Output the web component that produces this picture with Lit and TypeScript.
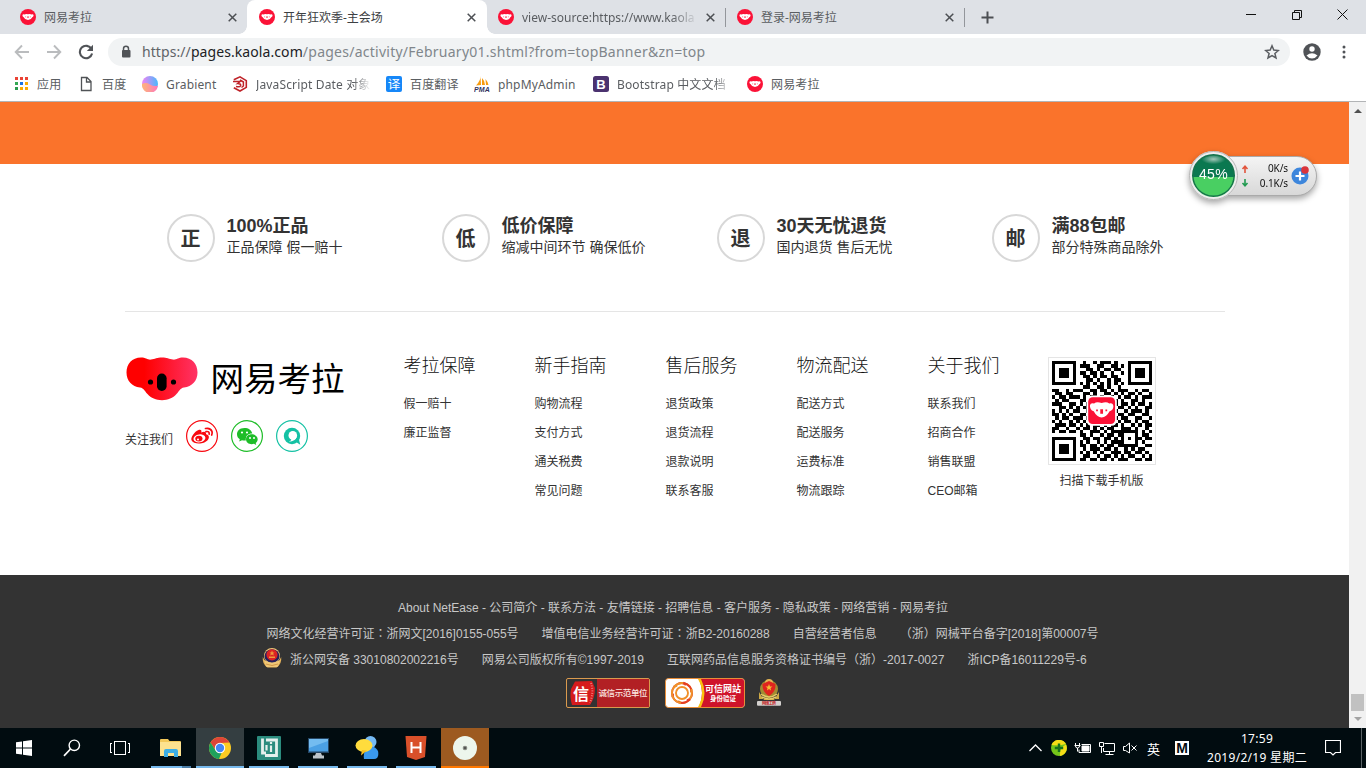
import { LitElement, html, svg, css } from "lit";
import { customElement } from "lit/decorators.js";

const koala = (size: number) => svg`<svg width=${size} height=${size} viewBox="0 0 16 16">
  <circle cx="8" cy="8" r="8" fill="#fb1237"/>
  <path d="M2.400 6.200Q2.600 5 4.400 5.400Q6 4.700 8 5.300Q10 4.700 11.600 5.400Q13.400 5 13.600 6.300Q13.500 7.800 12.300 8.200Q11 11 8 11.100Q5 11 3.700 8.200Q2.500 7.800 2.400 6.200Z" fill="#fff"/>
  <path d="M7.400 7.200h1.200v1.700h-1.200zM5.300 7.500h.8v.8h-.8zM9.900 7.500h.8v.8H9.900z" fill="#fb3350"/></svg>`;

const cross = svg`<svg width="9" height="9" viewBox="0 0 9 9"><path d="M.7.7l7.6 7.6M8.3.7L.7 8.3" stroke="#4c4f53" stroke-width="1.5"/></svg>`;

const tabs = [
  { title: "网易考拉", cls: "" },
  { title: "开年狂欢季-主会场", cls: "active" },
  { title: "view-source:https://www.kaola", cls: "sep" },
  { title: "登录-网易考拉", cls: "sep" },
];

const page = svg`<svg width="16" height="16" viewBox="0 0 16 16"><path d="M3.500 1.500h5.500l4 4v9h-9.500zM8.500 1.500v4.500h4.500" fill="none" stroke="#505356" stroke-width="1.300"/></svg>`;
const appsIcon = svg`<svg width="16" height="16" viewBox="0 0 16 16" shape-rendering="crispEdges">${[0, 1, 2].map(r => [0, 1, 2].map(c => svg`<rect x=${2 + c * 5} y=${1 + r * 5} width="3" height="3" fill=${[["#ea4335", "#ea4335", "#ea4335"], ["#34a853", "#1a73e8", "#fbab04"], ["#2b9a4d", "#fbab04", "#fbab04"]][r][c]}/>`))}</svg>`;
const grabient = svg`<svg width="16" height="16" viewBox="0 0 16 16"><defs><linearGradient id="ga"><stop stop-color="#f183f4"/><stop offset="1" stop-color="#48b8fb"/></linearGradient><linearGradient id="gb"><stop stop-color="#fdb678"/><stop offset="1" stop-color="#fd78bd"/></linearGradient></defs><circle cx="8" cy="8" r="8" fill="url(#ga)"/><path d="M0 8Q4 6 8 8.500T16 9.500A8 8 0 0 1 0 8Z" fill="url(#gb)"/></svg>`;
const jsIcon = svg`<svg width="16" height="16" viewBox="0 0 16 16"><path d="M1.800 3.800L8 .9L14.300 4.600V11.400L8 15L1.800 11.800" fill="none" stroke="#bf2228" stroke-width="1.600"/><path d="M1 5.500H8L5.500 7.600Q8.800 7.500 8.700 9.400Q8 11.600 4 10.500M8 4L11.400 6V10L9.500 11.500" fill="none" stroke="#bf2228" stroke-width="1.500"/></svg>`;
const fanyi = svg`<svg width="16" height="16" viewBox="0 0 16 16"><rect width="16" height="16" rx="2" fill="#1687f8"/><text x="8" y="12.600" text-anchor="middle" font-size="12.500" fill="#fff" font-family="Noto Sans CJK SC">译</text></svg>`;
const pma = svg`<svg width="16" height="16" viewBox="0 0 16 16"><path d="M6.500 0Q7 4 2 9.500L7 9ZM8 2Q11 5 11 9H8ZM11.500 3Q14 6 14.500 9H12Z" fill="#f89c0e"/><text x="0" y="15.500" font-size="7" textLength="16" font-weight="bold" font-style="italic" fill="#34345e" font-family="Liberation Sans">PMA</text></svg>`;
const boot = svg`<svg width="16" height="16" viewBox="0 0 16 16"><rect width="16" height="16" rx="2.500" fill="#4b326f"/><text x="8" y="12.700" text-anchor="middle" font-size="13" font-weight="bold" fill="#fff" font-family="Liberation Sans">B</text></svg>`;

const bookmarks = [
  { icon: appsIcon, label: "应用", w: 65 },
  { icon: page, label: "百度", w: 64 },
  { icon: grabient, label: "Grabient", w: 90 },
  { icon: jsIcon, label: "JavaScript Date 对象", w: 154, cut: true },
  { icon: fanyi, label: "百度翻译", w: 88 },
  { icon: pma, label: "phpMyAdmin", w: 119 },
  { icon: boot, label: "Bootstrap 中文文档", w: 154, cut: true },
  { icon: koala(16), label: "网易考拉", w: 90 },
];

const promises = [
  ["正", "100%正品", "正品保障 假一赔十"],
  ["低", "低价保障", "缩减中间环节 确保低价"],
  ["退", "30天无忧退货", "国内退货 售后无忧"],
  ["邮", "满88包邮", "部分特殊商品除外"],
];

const linkCols = [
  ["考拉保障", "假一赔十", "廉正监督"],
  ["新手指南", "购物流程", "支付方式", "通关税费", "常见问题"],
  ["售后服务", "退货政策", "退货流程", "退款说明", "联系客服"],
  ["物流配送", "配送方式", "配送服务", "运费标准", "物流跟踪"],
  ["关于我们", "联系我们", "招商合作", "销售联盟", "CEO邮箱"],
];

const qrRows = [
  "11111110010010111010001111111",
  "10000010111001100110101000001",
  "10111010001101011011001011101",
  "10111010110110100100101011101",
  "10111010011010110110001011101",
  "10000010001101001011001000001",
  "11111110101010101010101111111",
  "00000000011001101001000000000",
  "11001011100110110101110010110",
  "01101100011010011010101101001",
  "10110111010110100101011010111",
  "01011000110011000110100110100",
  "11100110101000000010110101101",
  "00110101011000000001101010011",
  "10101011001000000010010111010",
  "11010100110000000001101100110",
  "01011011101000000010110011001",
  "10100101010110011001011010110",
  "01110110101011010110100101011",
  "11001001011010101100111010010",
  "10110110100111010111111110101",
  "00000000110100101101100010110",
  "11111110011011011010101011011",
  "10000010101001010111100010100",
  "10111010110110101101111110011",
  "10111010010111011010010101100",
  "10111010101010100111011011010",
  "10000010011001011010101100101",
  "11111110110110110101110011011",
];

const qr = svg`<svg width="100" height="100" viewBox="0 0 29 29" shape-rendering="crispEdges">
  ${qrRows.map((r, y) => [...r].map((v, x) => v === "1" ? svg`<rect x=${x} y=${y} width="1" height="1"/>` : null))}
  <g shape-rendering="auto"><rect x="10" y="10" width="8.800" height="8.800" rx="1.500" fill="#fff"/><rect x="10.500" y="10.500" width="7.800" height="7.800" rx="1.300" fill="#fb1237"/>
  <path d="M11 12.800Q11.200 12 12.200 12.300Q13 11.700 14.400 12.200Q15.800 11.700 16.600 12.300Q17.700 12 17.800 13.100Q17.800 14.200 16.700 14.600Q15.800 16.300 14.400 16.400Q13 16.300 12.100 14.600Q10.900 14.100 11 12.800Z" fill="#fff"/><path d="M14 14h.8v1.300H14zM12.800 14.100h.5v.5h-.5zM15.500 14.100h.5v.5h-.5z" fill="#fb1237"/></g></svg>`;

const logo = svg`<svg width="72" height="44" viewBox="0 0 72 44"><defs><linearGradient id="kl"><stop offset=".25" stop-color="#fe0000"/><stop offset="1" stop-color="#ff3366"/></linearGradient></defs>
  <path d="M15 .5C20 .5 21.500 3 25 2.600C29 2 31 .5 36 .5S43 2 47 2.600C50.500 3 52 .5 57 .5C66 .5 71.500 7 71.500 15.500C71.500 24 66 29.500 58 30.500C54 31.200 53.500 34 50.500 37C47 41 42 43.200 36 43.200S25 41 21.500 37C18.500 34 18 31.200 14 30.500C6 29.500.5 24 .5 15.500C.5 7 6 .5 15 .5Z" fill="url(#kl)"/>
  <rect x="31" y="16.500" width="9.600" height="17.500" rx="4.800"/><circle cx="24.500" cy="25" r="2.600"/><circle cx="47.500" cy="25" r="2.600"/></svg>`;

const weibo = svg`<svg width="32" height="32" viewBox="0 0 32 32"><circle cx="16" cy="16" r="15.400" fill="none" stroke="#f8080f" stroke-width="1.200"/>
  <path d="M12.500 10C15 9 16 10.500 15.200 12.500C18 11.300 20.500 11.500 20 14.200C23 15 23.500 17 22.300 19.200C19.500 24.300 8 25.300 5.500 20.300C4.300 17.500 8.500 11.500 12.500 10Z" fill="#f8080f"/><ellipse cx="13.400" cy="18.400" rx="6" ry="4" fill="#fff" transform="rotate(-8 13 18)"/><ellipse cx="12.900" cy="18.600" rx="3.600" ry="2.900" fill="#f8080f"/><circle cx="12" cy="19.400" r="1" fill="#fff"/>
  <path d="M19.500 8.500Q24.500 7.500 26 11.500Q26.500 13.500 25.700 15M20 11.600Q23.500 11 23.200 14.200" fill="none" stroke="#f8080f" stroke-width="1.700" stroke-linecap="round"/></svg>`;
const wechat = svg`<svg width="32" height="32" viewBox="0 0 32 32"><circle cx="16" cy="16" r="15.400" fill="none" stroke="#1ebd28" stroke-width="1.200"/>
  <path d="M13.500 8C8.500 8 6 11 6 14.200C6 16.400 7 18 8.800 19.200L8.200 21.500L11 20.200Q13 20.800 14.800 20.500C14.500 15.500 17 13.600 21.300 13.500C20.500 10 17.500 8 13.500 8Z" fill="#1ebd28"/><path d="M21 14.300C17 14.300 15 16.600 15 19.200C15 23 19 25 23 23.800L25.200 25L24.700 22.900C26 22 26.700 20.700 26.700 19.200C26.700 16.500 24 14.300 21 14.300Z" fill="#1ebd28"/><g fill="#fff"><circle cx="11" cy="12.500" r="1.100"/><circle cx="16" cy="12.500" r="1.100"/><circle cx="19" cy="18" r="1"/><circle cx="23" cy="18" r="1"/></g></svg>`;
const yixin = svg`<svg width="32" height="32" viewBox="0 0 32 32"><circle cx="16" cy="16" r="15.400" fill="none" stroke="#14c1a4" stroke-width="1.200"/>
  <circle cx="16" cy="16" r="8.200" fill="#14c1a4"/><path d="M20 22L24.300 24.800L22.800 19Z" fill="#14c1a4"/>
  <circle cx="16.800" cy="15.400" r="4.300" fill="#fff"/><path d="M20.800 16.500Q19.500 21.500 12.800 21.800Q15.500 20.800 15.500 18.700L18 17Z" fill="#fff"/></svg>`;

const police = svg`<svg width="20" height="20" viewBox="0 0 20 20"><path d="M.8 9Q0 16 5.500 19.500H14.500Q20 16 19.200 9L16 15H4Z" fill="#e8b45b"/><circle cx="10" cy="8" r="8" fill="#f0c877"/><ellipse cx="10" cy="8" rx="7.500" ry="6.800" fill="#26215c"/><circle cx="10" cy="6.800" r="5.600" fill="#dc2323"/><path d="M10 2.500L10.800 4.500H12.500L11.200 5.600L11.800 7.500L10 6.400L8.200 7.500L8.800 5.600L7.500 4.500H9.200ZM7 8.500H13V9.900H7Z" fill="#f09a3a"/><path d="M2 12Q10 17.500 18 12L15.500 19H4.500Z" fill="#f0c877"/><path d="M4 16Q10 19 16 16" fill="none" stroke="#c98b3a" stroke-width=".8"/></svg>`;

const badge1 = svg`<svg width="84" height="30" viewBox="0 0 84 30"><rect x=".5" y=".5" width="83" height="29" rx="1.500" fill="#333" stroke="#d99a4e"/><rect x="31" y="1" width="52" height="28" fill="#b22024"/><path d="M9 3.500L26 3L29 10Q29 20 24 27H6Q3.500 19 5 11Z" fill="#d61a1c"/><path d="M25 5Q28 14 24 25" stroke="#e77" fill="none" stroke-dasharray="1 1.500" stroke-width="2"/><text x="7" y="21.500" font-size="16" font-weight="bold" fill="#fff" font-family="Noto Sans CJK SC">信</text><text x="32.500" y="18" font-size="8.500" textLength="49" font-weight="500" fill="#fbe6e0" font-family="Noto Sans CJK SC">诚信示范单位</text></svg>`;
const badge2 = svg`<svg width="80" height="30" viewBox="0 0 80 30"><rect x=".5" y=".5" width="79" height="29" rx="3" fill="#fff" stroke="#e88d38"/><path d="M34 1H77Q79 1 79 3V27Q79 29 77 29H34Q40 15 34 1Z" fill="#cf132a"/><path d="M33 1Q41 15 33 29H36Q43 15 36 1Z" fill="#fbc20e"/><g fill="none" stroke-width="1.900">${[0, 60, 120, 180, 240, 300].map((a, i) => svg`<path d="M7.500 19Q5.500 10 12.500 6Q17 3.500 21 7" stroke=${i % 2 ? "#f0912a" : "#e43c24"} transform="rotate(${a} 17 15)"/>`)}</g><circle cx="17" cy="15" r="6" fill="none" stroke="#f08f29" stroke-width="1.900"/><g fill="#fff" font-weight="bold" font-family="Noto Sans CJK SC"><text x="40" y="13.500" font-size="9" textLength="36">可信网站</text><text x="45" y="22.800" font-size="6.500" textLength="26">身份验证</text></g></svg>`;
const badge3 = svg`<svg width="24" height="30" viewBox="0 0 24 30"><circle cx="12" cy="11" r="9" fill="#a28b32"/><path d="M2 14L7 22H17L22 14V21H2Z" fill="#cda945"/><circle cx="12" cy="5" r="4" fill="#e4b454"/><path d="M5.500 6L12 3L18.500 6Q19 14 12 18Q5 14 5.500 6Z" fill="#df241e"/><path d="M12 6L13 8.500H15.500L13.500 10L14 12.500L12 11L10 12.500L10.500 10L8.500 8.500H11Z" fill="#f4bd32"/><path d="M4 16Q12 22 20 16M5 19Q12 23 19 19" stroke="#e6cb68" stroke-width="1.500" fill="none"/><rect x="0" y="23" width="24" height="4.800" rx="1" fill="#d3d0ce"/><text x="5" y="27" font-size="4" font-weight="bold" textLength="14" fill="#c32828" font-family="Noto Sans CJK SC">网络工商</text></svg>`;

const taskIcons = [
  svg`<svg width="24" height="24" viewBox="0 0 24 24"><path d="M4 6.300L10 5.400V11.500H4ZM11 5.200L20 4V11.500H11ZM4 12.500H10V18.600L4 17.700ZM11 12.500H20V20L11 18.800Z" fill="#fff"/></svg>`,
  svg`<svg width="24" height="24" viewBox="0 0 24 24"><circle cx="14.300" cy="9.300" r="5.200" fill="none" stroke="#fff" stroke-width="1.400"/><path d="M10.500 13L4 19.800" stroke="#fff" stroke-width="1.700"/></svg>`,
  svg`<svg width="24" height="24" viewBox="0 0 24 24" shape-rendering="crispEdges"><path d="M6.500 5.500H17.500V18.500H6.500ZM4 7.500H2.500V16.500H4M20 7.500H21.500V16.500H20" fill="none" stroke="#fff"/></svg>`,
  svg`<svg width="24" height="24" viewBox="0 0 24 24"><path d="M1 4Q1 3 2 3H9L10.500 5H21Q22 5 22 6V19H1Z" fill="#f3c95a"/><path d="M1 6H22V20H1Z" fill="#fde28f"/><path d="M5 21V15Q5 13 7 13H17Q19 13 19 15V21H15V17H9V21Z" fill="#3daee5"/></svg>`,
  svg`<svg width="24" height="24" viewBox="0 0 24 24"><circle cx="12" cy="12" r="11" fill="#fbcb23"/><path d="M2.500 6.500A11 11 0 0 1 21.500 6.500L12 7Q8 8 7.500 14Z" fill="#dd4538"/><path d="M2.500 6.500L7.700 14.500Q9.500 17 13.500 17L11 23A11 11 0 0 1 2.500 6.500Z" fill="#1fa15c"/><circle cx="12" cy="12" r="5.200" fill="#fff"/><circle cx="12" cy="12" r="4.200" fill="#4486f4"/></svg>`,
  svg`<svg width="24" height="24" viewBox="0 0 24 24"><rect width="24" height="24" rx="1" fill="#2b8c7e"/><path d="M5.500 2.500V17H9M9 4H19.500V19.500H8" fill="none" stroke="#e5f0ed" stroke-width="2.800"/><path d="M9.500 9V14.500M14 9.500V16M14 6V8" fill="none" stroke="#e5f0ed" stroke-width="2.200"/></svg>`,
  svg`<svg width="24" height="24" viewBox="0 0 24 24"><path d="M2 2H23V17H2Z" fill="#244563"/><path d="M3 3H22V15.500H3Z" fill="#4ba0e4"/><path d="M3 12L22 5V3H3Z" fill="#74bcf0"/><path d="M10 17H15L16 19.500H18V22.500H7V19.500H9Z" fill="#bcc4ca"/></svg>`,
  svg`<svg width="24" height="24" viewBox="0 0 24 24"><circle cx="15.500" cy="6" r="6" fill="#75baf4"/><path d="M9 23Q8 16 12 12.500Q19 8 23 15Q24.500 23 19 23Z" fill="#3a99ee"/><ellipse cx="9" cy="9.500" rx="8.500" ry="6.500" fill="#ffdc3d"/><path d="M7 14L6 19.500L12 14.500Z" fill="#f5bd22"/></svg>`,
  svg`<svg width="24" height="24" viewBox="0 0 24 24"><path d="M1.500 0H22.500L21 21L12 24L3 21Z" fill="#d9502a"/><path d="M7.500 6V17M16.500 6V17M7.500 11.500H16.500" stroke="#fff" stroke-width="2"/></svg>`,
  svg`<svg width="24" height="24" viewBox="0 0 24 24"><circle cx="12" cy="12" r="12" fill="#edf6ec"/><circle cx="12" cy="12" r="2.300" fill="#868b83"/><circle cx="12" cy="12" r="1" fill="#444"/></svg>`,
];
const taskCls = ["", "", "", "run first", "run cur", "run", "run", "run", "run", "run hot"];

// Full-width punctuation is set in the face that centres it in the em box.
const centred = (s: string) => s.split(/([：（）])/).map(p => (/^[：（）]$/.test(p) ? html`<span class="punct">${p}</span>` : p));

const licences = [
  "网络文化经营许可证：浙网文[2016]0155-055号",
  "增值电信业务经营许可证：浙B2-20160288",
  "自营经营者信息",
  "（浙）网械平台备字[2018]第00007号",
];

@customElement("app-root")
export class AppRoot extends LitElement {
  static styles = css`
    :host { display: block; width: 1366px; height: 768px; overflow: hidden; font: 12px "Liberation Sans", "Noto Sans CJK SC", sans-serif; color: #333; }
    * { box-sizing: border-box; }
    svg { display: block; flex: none; }
    .screen { display: flex; flex-direction: column; height: 768px; background: #fff; position: relative; }
    .ui { font-family: "Noto Sans", "Noto Sans CJK SC", sans-serif; color: #5a5d61; }
    .tabs { height: 34px; background: #dee1e6; display: flex; padding-left: 8px; align-items: stretch; }
    .tab { width: 239px; flex: none; display: flex; align-items: center; padding: 0 11px 0 12px; gap: 8px; position: relative; }
    .tab.active { background: #fff; border-radius: 8px 8px 0 0; color: #3c4043; width: 240px; margin-right: -1px; padding-right: 12px; }
    .tab.active::before, .tab.active::after { content: ""; position: absolute; bottom: 0; width: 8px; height: 8px; }
    .tab.active::before { left: -8px; background: radial-gradient(circle at 0 0, transparent 7.500px, #fff 8px); }
    .tab.active::after { right: -8px; background: radial-gradient(circle at 100% 0, transparent 7.500px, #fff 8px); }
    .tab.sep::after { content: ""; position: absolute; right: -1px; top: 8px; height: 19px; width: 1px; background: #93969b; }
    .title { flex: none; width: 176px; white-space: nowrap; overflow: hidden; line-height: 20px; padding-top: 1px; }
    .fade { -webkit-mask-image: linear-gradient(90deg, #000 85%, transparent); mask-image: linear-gradient(90deg, #000 85%, transparent); }
    .tab .x { margin-left: auto; }
    .plus { margin: 11px 0 0 17px; }
    .winbtns { margin-left: auto; padding: 9px 17px 0 0; }
    .toolbar { height: 35px; display: flex; align-items: center; padding: 0 14px; }
    .nav { display: flex; width: 94px; gap: 16px; }
    .omni { flex: none; height: 28px; width: 1182px; border-radius: 14px; background: #f1f3f4; display: flex; align-items: center; padding: 0 10px 0 13px; }
    .url { margin-left: 11px; flex: 1; font-family: "Noto Sans", sans-serif; font-size: 14px; letter-spacing: .25px; color: #80868b; white-space: nowrap; line-height: 20px; }
    .url .scheme { color: #5f6368; letter-spacing: .08px; }
    .url .host { color: #202124; letter-spacing: .08px; }
    .tools { display: flex; gap: 20px; align-items: center; padding-left: 12px; }
    .marks { height: 33px; border-bottom: 1px solid #b2b4b6; display: flex; padding: 0 0 2px 13px; align-items: center; }
    .mark { display: flex; gap: 8px; align-items: center; white-space: nowrap; flex: none; letter-spacing: .15px; }
    .mark .lbl { line-height: 20px; padding-top: 1px; }
    .mark .cut { width: 115px; overflow: hidden; }
    .main { height: 626px; display: flex; }
    .page { width: 1349px; display: flex; flex-direction: column; }
    .orange { height: 62px; background: #fa732b; }
    .wrap { width: 1100px; margin: 0 auto 0 125px; }
    .promises { height: 148px; padding-top: 50px; display: flex; border-bottom: 1px solid #e5e5e5; }
    .promise { width: 275px; padding-left: 42px; display: flex; gap: 11.500px; }
    .ring { width: 48px; height: 48px; border: 2px solid #d8d8d8; border-radius: 50%; display: flex; align-items: center; justify-content: center; font-size: 20px; font-weight: bold; padding: 0 1px 2px 0; }
    .ptxt b { display: block; font-size: 18px; line-height: 24px; white-space: nowrap; }
    .ptxt span { display: block; font-size: 14px; line-height: 19px; white-space: nowrap; }
    .links { height: 263px; display: flex; padding-top: 45px; }
    .brand { width: 278.500px; }
    .logo { display: flex; gap: 13px; align-items: center; height: 44px; padding-left: .5px; }
    .logo span { font-size: 33.500px; font-weight: 400; color: #000; line-height: 44px; padding-top: 1px; }
    .follow { display: flex; align-items: center; margin-top: 19px; gap: 13px; }
    .follow span { padding-top: 4px; width: 48px; white-space: nowrap; }
    .col { width: 131px; }
    .col h4 { font-size: 18px; font-weight: 300; color: #111; line-height: 24px; margin: -3px 0 18px; }
    .col a { display: block; line-height: 17px; height: 17px; margin-bottom: 12px; }
    .qr { width: 108px; margin-left: -10.500px; text-align: center; }
    .qrbox { width: 108px; height: 108px; border: 1px solid #e5e5e5; display: flex; align-items: center; justify-content: center; margin-bottom: 6px; }
    .qrcap { padding-right: 1px; }
    .legal { height: 153px; background: #333; color: #c8c8c8; padding-top: 18px; display: flex; flex-direction: column; align-items: center; }
    .line { height: 26px; display: flex; align-items: center; gap: 23px; white-space: nowrap; padding-right: 3px; }
    .line.two { padding: 0 0 0 16px; }
    .line.three { padding: 0; }
    .punct { font-family: "Noto Sans CJK TC"; }
    .police { display: flex; gap: 7.500px; align-items: center; }
    .badges { display: flex; gap: 15px; padding-top: 7px; padding-right: 2px; }
    .badges svg:last-child { margin-left: -3px; }
    .scroll { width: 17px; background: #f1f1f1; display: flex; flex-direction: column; align-items: center; }
    .up { margin-top: 7px; }
    .thumb { margin-top: 581px; width: 13px; height: 17px; background: #c1c1c1; }
    .down { margin-top: 6px; }
    .taskbar { height: 40px; background: #010c10; display: flex; color: #fff; }
    .task { width: 48px; height: 40px; margin-right: 1px; display: flex; align-items: center; justify-content: center; position: relative; }
    .task:nth-child(-n+3) { margin-right: 0; }
    .task.first { margin-left: 3px; }
    .run::after { content: ""; position: absolute; bottom: 0; left: 4px; width: 40px; height: 2px; background: #76b9ed; }
    .run.first::after { background: linear-gradient(90deg, #76b9ed 31px, #4a7da6 31px); }
    .cur { background: #343e41; }
    .run.cur::after, .run.hot::after { left: 0; width: 48px; }
    .hot { background: #9d5a20; }
    .run.hot::after { background: #ff7800; }
    .tray { margin-left: auto; display: flex; align-items: center; font-family: "Noto Sans", "Noto Sans CJK SC", sans-serif; }
    .tray svg:first-child { margin-right: 1px; }
    .ime { font-size: 13px; width: 13px; margin-left: 5px; }
    .m { width: 14px; height: 14px; margin-left: 15px; background: #fff; color: #010c10; font: bold 14px/14px "Liberation Sans"; text-align: center; }
    .clock { width: 106px; margin: 0 15px 0 15px; text-align: center; line-height: 19px; white-space: nowrap; letter-spacing: .3px; }
    .show { height: 40px; width: 5px; border-left: 1px solid #5a6265; margin-left: 20px; }
    .meter { position: absolute; left: 1189px; top: 151px; width: 128px; height: 48px; display: flex; align-items: center; filter: drop-shadow(0 3px 3px rgba(0,0,0,.35)); }
    .dial { flex: none; width: 49px; height: 49px; border-radius: 50%; border: 3px solid #eee; outline: 1px solid #b5b5b5; outline-offset: -1px; background: radial-gradient(ellipse 12px 5px at 50% 12%, #a3c8ba, transparent), linear-gradient(#0a7850 0 53%, #49cf62 53%); box-shadow: inset 0 0 0 1.500px #17734c; color: #fff; font-size: 14px; letter-spacing: .3px; display: flex; align-items: center; justify-content: center; padding-bottom: 2px; z-index: 1; }
    .pill { flex: none; width: 103px; height: 40px; margin-left: -24px; border-radius: 4px 20px 20px 4px; border: 1px solid #aaa; background: linear-gradient(#f4f4f4, #d8d8d8); display: flex; align-items: center; padding-left: 26px; margin-top: 1px; }
    .rates { width: 39px; text-align: right; color: #111; font: 10px/15px "Noto Sans", sans-serif; letter-spacing: -.1px; white-space: nowrap; }
    .boost { margin-left: -1px; }
  `;

  render() {
    return html`<div class="screen">
      <div class="tabs ui">
        ${tabs.map(t => html`<div class="tab ${t.cls}">${koala(16)}<span class="title ${t.title.length > 20 ? "fade" : ""}">${t.title}</span><span class="x">${cross}</span></div>`)}
        <svg class="plus" width="13" height="13" viewBox="0 0 13 13"><path d="M6.500 .5V12.500M.5 6.500H12.500" stroke="#4c4f53" stroke-width="2"/></svg>
        <svg class="winbtns" width="120" height="20" viewBox="0 0 103 11"><path d="M0 5.500H10M46.500 3.500H53.500V10.500H46.500ZM48.500 3.500V1.500H55.500V8.500H53.500M91.500 .5L101.500 10.500M101.500 .5L91.500 10.500" fill="none" stroke="#111"/></svg>
      </div>
      <div class="toolbar">
        <div class="nav">
          <svg width="16" height="16" viewBox="0 0 16 16"><path d="M15 8H2M8 1.500L1.700 8L8 14.500" fill="none" stroke="#babcbe" stroke-width="1.900"/></svg>
          <svg width="16" height="16" viewBox="0 0 16 16"><path d="M1 8H14M8 1.500L14.300 8L8 14.500" fill="none" stroke="#babcbe" stroke-width="1.900"/></svg>
          <svg width="16" height="16" viewBox="0 0 16 16"><path d="M13.500 5A6.200 6.200 0 1 0 14.100 9.500" fill="none" stroke="#505357" stroke-width="2.100"/><path d="M15 .8V7H8.800Z" fill="#505357"/></svg>
        </div>
        <div class="omni">
          <svg width="10" height="14" viewBox="0 0 10 14"><path d="M2.500 6V3.800A2.500 2.500 0 0 1 7.500 3.800V6" fill="none" stroke="#505357" stroke-width="1.500"/><rect x="1" y="5" width="8.500" height="7.500" rx="1" fill="#505357"/></svg>
          <span class="url"><span class="scheme">https://</span><span class="host">pages.kaola.com</span>/pages/activity/February01.shtml?from=topBanner&amp;zn=top</span>
          <svg width="16" height="16" viewBox="0 0 16 16"><path d="M8 1.800L9.800 6.100L14.400 6.500L10.900 9.500L12 14L8 11.600L4 14L5.100 9.500L1.600 6.500L6.200 6.100Z" fill="none" stroke="#5a5d61" stroke-width="1.500"/></svg>
        </div>
        <div class="tools">
          <svg width="20" height="20" viewBox="0 0 20 20"><circle cx="10" cy="10" r="8.700" fill="#505357"/><circle cx="10" cy="7" r="2.700" fill="#fff"/><path d="M4.500 13.600Q10 8.800 15.500 13.600Q13.500 16.500 10 16.500T4.500 13.600Z" fill="#fff"/></svg>
          <svg width="4" height="16" viewBox="0 0 4 16"><g fill="#505357"><circle cx="2" cy="3" r="1.500"/><circle cx="2" cy="8" r="1.500"/><circle cx="2" cy="13" r="1.500"/></g></svg>
        </div>
      </div>
      <div class="marks ui">${bookmarks.map(b => html`<div class="mark" style="width:${b.w}px">${b.icon}<span class="lbl ${b.cut ? "cut fade" : ""}">${b.label}</span></div>`)}</div>
      <div class="main">
        <div class="page">
          <div class="orange"></div>
          <div class="wrap promises">${promises.map(p => html`<div class="promise"><div class="ring">${p[0]}</div><div class="ptxt"><b>${p[1]}</b><span>${p[2]}</span></div></div>`)}</div>
          <div class="wrap links">
            <div class="brand"><div class="logo">${logo}<span>网易考拉</span></div><div class="follow"><span>关注我们</span>${weibo}${wechat}${yixin}</div></div>
            ${linkCols.map(c => html`<div class="col"><h4>${c[0]}</h4>${c.slice(1).map(l => html`<a>${l}</a>`)}</div>`)}
            <div class="qr"><div class="qrbox">${qr}</div><div class="qrcap">扫描下载手机版</div></div>
          </div>
          <div class="legal">
            <div class="line">About NetEase - 公司简介 - 联系方法 - 友情链接 - 招聘信息 - 客户服务 - 隐私政策 - 网络营销 - 网易考拉</div>
            <div class="line two">${licences.map(l => html`<span>${centred(l)}</span>`)}</div>
            <div class="line three"><span class="police">${police}浙公网安备 33010802002216号</span><span>网易公司版权所有©1997-2019</span><span>${centred("互联网药品信息服务资格证书编号（浙）-2017-0027")}</span><span>浙ICP备16011229号-6</span></div>
            <div class="badges">${badge1}${badge2}${badge3}</div>
          </div>
        </div>
        <div class="scroll">
          <svg class="up" width="8" height="4" viewBox="0 0 8 4"><path d="M0 4L4 0L8 4Z" fill="#505050"/></svg>
          <div class="thumb"></div>
          <svg class="down" width="8" height="4" viewBox="0 0 8 4"><path d="M0 0H8L4 4Z" fill="#a3a3a3"/></svg>
        </div>
      </div>
      <div class="taskbar">
        ${taskIcons.map((ic, i) => html`<div class="task ${taskCls[i]}">${ic}</div>`)}
        <div class="tray">
          <svg width="112" height="16" viewBox="0 0 112 16"><path d="M.5 11L6.500 5L12.500 11" fill="none" stroke="#fff" stroke-width="1.300"/><circle cx="30" cy="8" r="8" fill="#74c51a"/><path d="M22.500 5A8 8 0 0 1 37 4Q30 6 22.500 5ZM37 4.500A8 8 0 0 1 31 16Q30 8 37 4.500Z" fill="#f5dc16"/><path d="M30 3.500V12M25.800 8H34.200" stroke="#16701c" stroke-width="2.400"/>
            <g fill="none" stroke="#fff"><path d="M52.500 4.500H61.500V12.500H50V9.500M46.500 3V6Q46.500 8 48.500 8T50.500 6V3M45.500 5.500H51.500M48.500 8V11.500"/><path d="M53 6H60V11H53Z" fill="#fff"/><path d="M75.500 3.500H85.500V11.500H74.500V8M80.500 11.500V14.500M76.500 14.500H84.500M70.500 2.500H74.500V6.500H70.500ZM72.500 6.500V13"/><path d="M94.500 6.500H96.500L100.500 3V13L96.500 10.500H94.500ZM102.500 5.500L107.500 10.500M107.500 5.500L102.500 10.500"/></g></svg>
          <span class="ime">英</span><span class="m">M</span>
          <div class="clock">17:59<br>2019/2/19 星期二</div>
          <svg width="16" height="16" viewBox="0 0 16 16"><path d="M.5 .5H15.500V12.500H10.500L8 15L5.500 12.500H.5Z" fill="none" stroke="#fff" stroke-width="1.200"/></svg>
          <span class="show"></span>
        </div>
      </div>
      <div class="meter">
        <div class="dial">45%</div>
        <div class="pill">
          <svg width="8" height="24" viewBox="0 0 8 24"><path d="M4 9V3M1.500 5L4 2.300L6.500 5" stroke="#e2543c" fill="none" stroke-width="1.600"/><path d="M4 15V21M1.500 19L4 21.700L6.500 19" stroke="#219a50" fill="none" stroke-width="1.600"/></svg>
          <div class="rates">0K/s<br>0.1K/s</div>
          <svg class="boost" width="22" height="24" viewBox="0 0 22 24"><circle cx="13" cy="12" r="8.500" fill="#3d86dc"/><path d="M13 7.500V16.500M8.500 12H17.500" stroke="#fff" stroke-width="2.200"/><circle cx="18" cy="6" r="3.800" fill="#da343b"/></svg>
        </div>
      </div>
    </div>`;
  }
}
